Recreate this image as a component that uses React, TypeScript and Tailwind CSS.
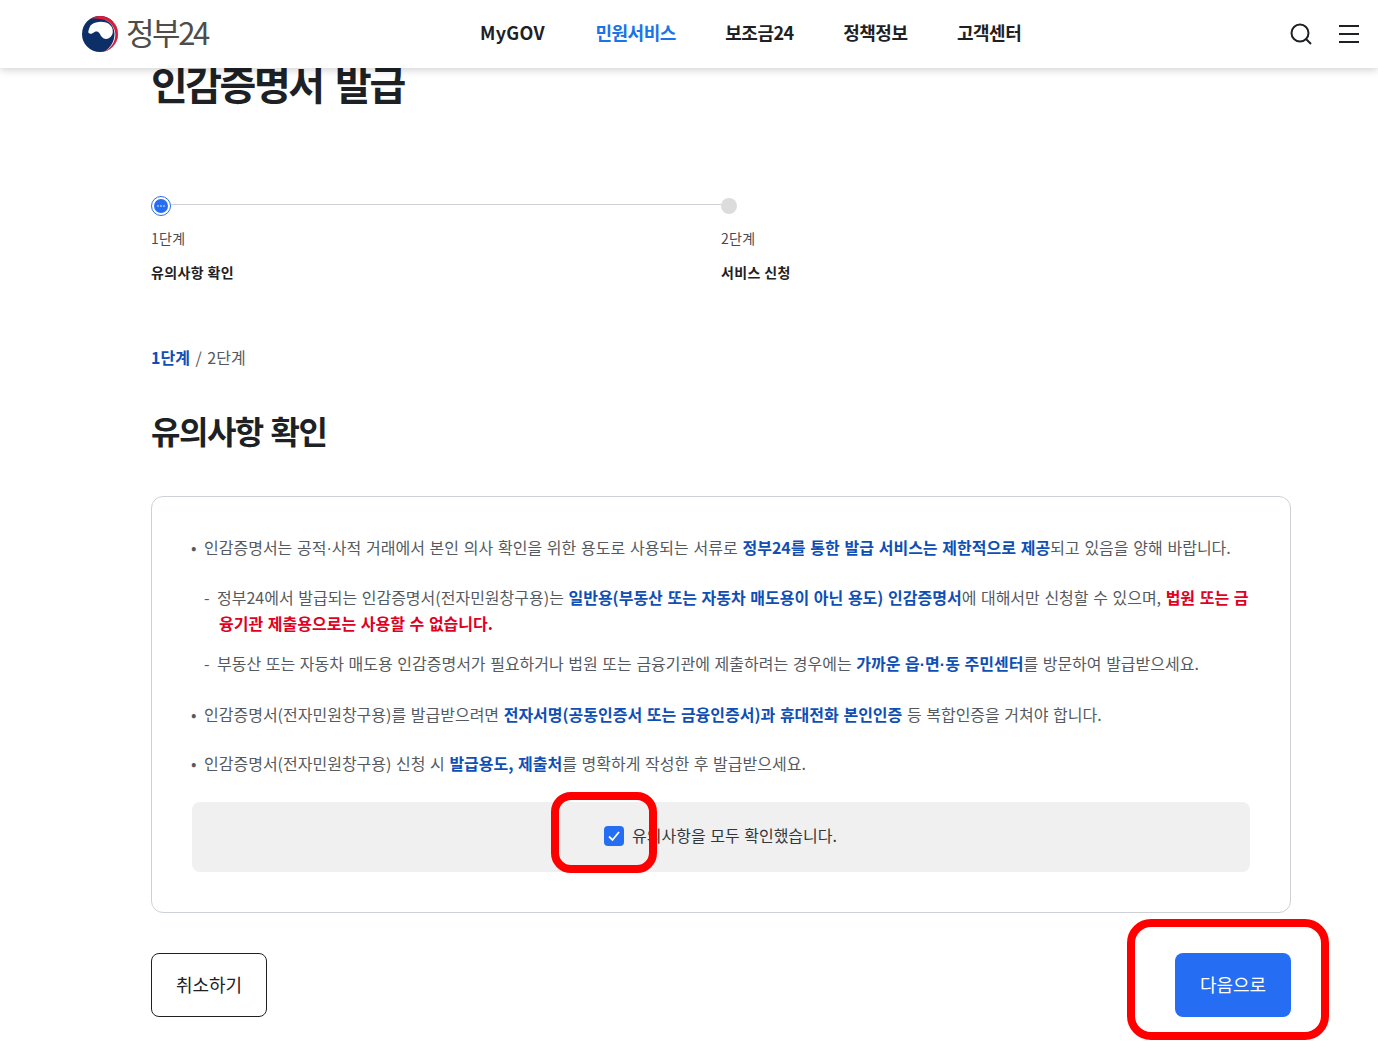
const FONT = "font-['Noto_Sans_CJK_KR','Noto_Sans',sans-serif]";

function Logo(): React.JSX.Element {
  return (
    <svg width="38" height="36" viewBox="0 0 38 36" aria-hidden="true">
      <circle cx="19" cy="18" r="18" fill="#0b2f66" />
      <path d="M8 13 C7.300 15 7 16.500 7.700 17 C9 18.500 11.500 17.500 14 15.700 C15.500 15 17 15.500 18 16.700 C19.500 18.500 20 20.500 21.300 21.300 C23 23.500 27 23.500 29.500 21 C31 19.500 31.800 17.500 31.800 15.700 C31.800 13.500 31.300 11.500 30.200 10.300 C28.500 8 26.500 6.800 24 6.300 C21 5.500 18.500 5.500 16 6.300 C13 6.800 11 8 9.500 9.500 C8.800 10.500 8.400 11.700 8 13 Z" fill="#ffffff" />
      <path d="M24 4 C30 6 33.500 12 33.500 18 C33.500 25 30 31 24 35.300 L27 34 C35 30 38 22 36.500 14 L33 6 Z" fill="#ffffff" />
      <path d="M10 2.500 C13 .8 16 0 19 0 C29 0 37 8 37 18 C37 26 31.500 33 24 35.300 C31 31 34.500 25 34.300 18 C34 9.500 27 3.500 19 3 C15.500 2.600 12.500 2.500 10 2.500 Z" fill="#d81e3a" />
    </svg>
  );
}

function Header(): React.JSX.Element {
  const menus = ['MyGOV', '민원서비스', '보조금24', '정책정보', '고객센터'];
  return (
    <header className="relative z-10 flex h-[68px] items-center bg-white pb-[3px] shadow-[0_2px_8px_rgba(0,0,0,0.18)]">
      <div className="ml-[81px] flex w-[399px] items-center gap-[7px] pt-[3px]">
        <Logo />
        <span className="pb-[5px] text-[31px] leading-none tracking-[-2.4px] text-[#4d4d4d]">정부24</span>
      </div>
      <nav className="flex gap-[49.500px] text-[18px] font-bold tracking-[-0.5px] text-[#1e2124]">
        {menus.map((menu) => (
          <span
            key={menu}
            className={
              menu === '민원서비스' ? 'text-[#1a73e8]' : menu === 'MyGOV' ? 'w-[66px] tracking-[0.3px]' : ''
            }
          >
            {menu}
          </span>
        ))}
      </nav>
      <div className="ml-auto mr-[19px] flex items-center gap-[26px] pt-[3px]">
        <svg width="24" height="24" viewBox="0 0 24 24" fill="none" stroke="#1e2124" strokeWidth="2" aria-hidden="true">
          <circle cx="11" cy="11" r="8.500" />
          <path d="M17 17l5 5" />
        </svg>
        <div className="flex w-5 flex-col gap-[6px]">
          <div className="h-[2px] bg-[#1e2124]" />
          <div className="h-[2px] bg-[#1e2124]" />
          <div className="h-[2px] bg-[#1e2124]" />
        </div>
      </div>
    </header>
  );
}

function Stepper(): React.JSX.Element {
  return (
    <div className="mt-[89px] grid w-[1140px] grid-cols-[570px_1fr]">
      <div>
        <div className="flex h-5 items-center">
          <div className="flex h-5 w-5 items-center justify-center rounded-full border border-[#256ef4] bg-white">
            <div className="flex h-[14px] w-[14px] items-center justify-center rounded-full bg-[#256ef4]">
              <svg width="8" height="2" viewBox="0 0 8 2" fill="#fff" aria-hidden="true">
                <circle cx="1" cy="1" r="0.8" />
                <circle cx="4" cy="1" r="0.8" />
                <circle cx="7" cy="1" r="0.8" />
              </svg>
            </div>
          </div>
          <div className="mb-[3px] h-px flex-1 bg-[#cdd1d5]" />
        </div>
        <p className="mt-[10px] text-[14px] leading-[24px] tracking-[0.35px] text-[#464c53]">1단계</p>
        <p className="mt-[10px] text-[14px] font-bold leading-[24px] tracking-[0.35px] text-[#1e2124]">유의사항 확인</p>
      </div>
      <div>
        <div className="flex h-5 items-center">
          <div className="h-4 w-4 rounded-full bg-[#dcdcdc]" />
        </div>
        <p className="mt-[10px] text-[14px] leading-[24px] tracking-[0.35px] text-[#464c53]">2단계</p>
        <p className="mt-[10px] text-[14px] font-bold leading-[24px] tracking-[0.35px] text-[#1e2124]">서비스 신청</p>
      </div>
    </div>
  );
}

function Blue({ children }: { children: React.ReactNode }): React.JSX.Element {
  return <b className="font-bold text-[#0f4fb5]">{children}</b>;
}

function Mark({ children }: { children: React.ReactNode }): React.JSX.Element {
  return <span className="inline-block w-[13px] indent-0">{children}</span>;
}

// the CJK font's middle dot is too wide, so take it from a latin font
function Dot(): React.JSX.Element {
  return <span className="font-['Liberation_Sans'] leading-none">·</span>;
}

function Notice(): React.JSX.Element {
  return (
    <div className="mt-[43px] w-[1140px] rounded-[12px] border border-[#cdd1d5] px-[40px] pb-[40px] pt-[37px] text-[16px] leading-[26px] text-[#555a60] [word-spacing:1px]">
      <p className="pl-[12px] -indent-[13px] [word-spacing:1.15px]">
        <Mark>•</Mark>인감증명서는 공적<Dot />사적 거래에서 본인 의사 확인을 위한 용도로 사용되는 서류로 <Blue>정부24를 통한 발급 서비스는 제한적으로 제공</Blue>되고 있음을 양해 바랍니다.
      </p>
      <p className="mt-[24px] pl-[27px] -indent-[15px]">
        <Mark>-</Mark>정부24에서 발급되는 인감증명서(전자민원창구용)는 <Blue>일반용(부동산 또는 자동차 매도용이 아닌 용도) 인감증명서</Blue>에 대해서만 신청할 수 있으며, <b className="font-bold text-[#e0001f]">법원 또는 금융기관 제출용으로는 사용할 수 없습니다.</b>
      </p>
      <p className="mt-[14px] pl-[27px] -indent-[15px]">
        <Mark>-</Mark>부동산 또는 자동차 매도용 인감증명서가 필요하거나 법원 또는 금융기관에 제출하려는 경우에는 <Blue>가까운 읍<Dot />면<Dot />동 주민센터</Blue>를 방문하여 발급받으세요.
      </p>
      <p className="mt-[25px] pl-[12px] -indent-[13px]">
        <Mark>•</Mark>인감증명서(전자민원창구용)를 발급받으려면 <Blue>전자서명(공동인증서 또는 금융인증서)과 휴대전화 본인인증</Blue> 등 복합인증을 거쳐야 합니다.
      </p>
      <p className="mt-[23px] pl-[12px] -indent-[13px]">
        <Mark>•</Mark>인감증명서(전자민원창구용) 신청 시 <Blue>발급용도, 제출처</Blue>를 명확하게 작성한 후 발급받으세요.
      </p>
      <div className="mt-[26px] flex h-[70px] items-center justify-center gap-2 rounded-[8px] bg-[#f0f0f0] pb-[4px] pr-[1px] text-[#33373c]">
        <div className="mt-[2px] flex h-5 w-5 items-center justify-center rounded-[4px] bg-[#256ef4]">
          <svg width="16" height="16" viewBox="0 0 16 16" fill="none" stroke="#fff" strokeWidth="1.800" aria-hidden="true">
            <path d="M3 8.500l3.500 3.500 6.500-8" />
          </svg>
        </div>
        <span>유의사항을 모두 확인했습니다.</span>
      </div>
    </div>
  );
}

export default function App(): React.JSX.Element {
  return (
    <div className={`relative h-[1062px] overflow-hidden bg-white ${FONT}`}>
      <Header />
      <main className="ml-[151px] -mt-[9px]">
        <h1 className="text-[40px] font-bold leading-[48px] tracking-[-2.5px] text-[#1e2124] [word-spacing:6px]">인감증명서 발급</h1>
        <Stepper />
        <p className="mt-[61px] text-[16px] leading-[24px] text-[#555a60] [word-spacing:2px]">
          <b className="font-bold text-[#0f4fb5]">1단계</b> / 2단계
        </p>
        <h2 className="mt-[38px] text-[32px] font-bold leading-[46px] tracking-[-1.5px] text-[#1e2124] [word-spacing:2px]">유의사항 확인</h2>
        <Notice />
        <div className="mt-10 flex w-[1140px] justify-between">
          <button type="button" className="h-16 w-[116px] rounded-[8px] border border-[#1e2124] bg-white pb-[2px] text-[18px] text-[#1e2124]">
            취소하기
          </button>
          <button type="button" className="h-16 w-[116px] rounded-[8px] bg-[#256ef4] pb-[2px] text-[18px] text-white">
            다음으로
          </button>
        </div>
      </main>
      {/* review markers drawn on top of the screenshot */}
      <div className="absolute left-[551px] top-[792px] h-[81px] w-[106px] rounded-[20px] border-[8px] border-[#ff0000]" />
      <div className="absolute left-[1127px] top-[919px] h-[121px] w-[202px] rounded-[24px] border-[8px] border-[#ff0000]" />
    </div>
  );
}
